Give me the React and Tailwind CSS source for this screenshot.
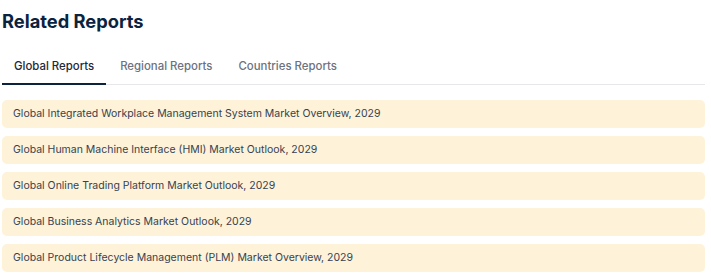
import React, { useState } from 'react';

const tabs = ['Global Reports', 'Regional Reports', 'Countries Reports'];

const reports = [
  'Global Integrated Workplace Management System Market Overview, 2029',
  'Global Human Machine Interface (HMI) Market Outlook, 2029',
  'Global Online Trading Platform Market Outlook, 2029',
  'Global Business Analytics Market Outlook, 2029',
  'Global Product Lifecycle Management (PLM) Market Overview, 2029',
];

const App = () => {
  const [active, setActive] = useState(0);

  return (
    <div className="w-[711px] h-[277px] bg-white font-['Inter',sans-serif] overflow-hidden">
      <div className="ml-[2px] w-[703px]">
        {/* Heading */}
        <h2 className="pt-[9px] text-[18.3px] leading-[24px] font-bold text-[#0c2340]">
          Related Reports
        </h2>

        {/* Tabs */}
        <div className="mt-[21px] flex gap-[2px] border-b border-[#e5e7eb]">
          {tabs.map((t, i) => (
            <button
              key={t}
              onClick={() => setActive(i)}
              className={`px-3 pb-[9px] pt-[4px] text-[11.4px] leading-[16px] font-medium -mb-px border-b-2 ${
                active === i ? 'border-[#0c2340] text-[#1f2937]' : 'border-transparent text-[#6b7280]'
              }`}
            >
              {t}
            </button>
          ))}
        </div>

        {/* Report list */}
        <div className="mt-[15px] flex flex-col gap-2">
          {reports.map((r) => (
            <div
              key={r}
              className="h-[28px] flex items-center px-[11px] rounded-[5px] bg-[#fef3d8] text-[10.5px] text-[#374151]"
            >
              {r}
            </div>
          ))}
        </div>
      </div>
    </div>
  );
};

export default App;
